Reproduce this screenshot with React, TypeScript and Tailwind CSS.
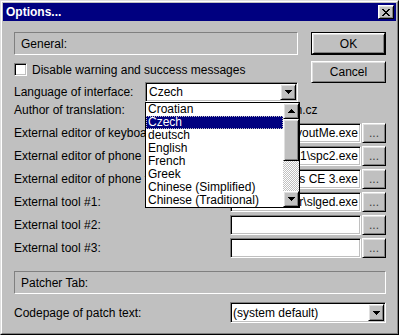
import React from 'react';

const sunken =
  'border border-t-[#808080] border-l-[#808080] border-r-white border-b-white shadow-[inset_1px_1px_0_#000,inset_-1px_-1px_0_#c0c0c0] p-[1px]';
const raised =
  'border border-t-white border-l-white border-r-black border-b-black shadow-[inset_1px_1px_0_#dfdfdf,inset_-1px_-1px_0_#808080] bg-[#c0c0c0]';

const Arrow = ({ up = false }: { up?: boolean }) => {
  const rows = up ? [3, 2, 1, 0] : [0, 1, 2, 3];
  return (
    <svg width="7" height="4" viewBox="0 0 7 4" shapeRendering="crispEdges">
      {rows.map((r, i) => (
        <rect key={i} x={r} y={i} width={7 - r * 2} height="1" fill="#000" />
      ))}
    </svg>
  );
};

const CloseGlyph = () => {
  const pattern = ['XX....XX', '.XX..XX.', '..XXXX..', '...XX...', '..XXXX..', '.XX..XX.', 'XX....XX'];
  return (
    <svg width="8" height="7" viewBox="0 0 8 7" shapeRendering="crispEdges">
      {pattern.map((row, y) =>
        row.split('').map((c, x) => (c === 'X' ? <rect key={`${x}-${y}`} x={x} y={y} width="1" height="1" fill="#000" /> : null))
      )}
    </svg>
  );
};

const ComboButton = () => (
  <div className={`${raised} w-[16px] h-full flex items-center justify-center shrink-0`}>
    <Arrow />
  </div>
);

const languages = ['Croatian', 'Czech', 'deutsch', 'English', 'French', 'Greek', 'Chinese (Simplified)', 'Chinese (Traditional)'];

const fields = [
  { label: 'External editor of keyboard layout:', value: 'C:\\Programs\\LayoutMe\\LayoutMe.exe' },
  { label: 'External editor of phone pictures:', value: 'C:\\Programs\\Siemens\\1\\spc2.exe' },
  { label: 'External editor of phone fonts:', value: 'C:\\Programs\\Siemens CE 3.exe' },
  { label: 'External tool #1:', value: 'C:\\Programs\\SLGEditor\\slged.exe' },
  { label: 'External tool #2:', value: '' },
  { label: 'External tool #3:', value: '' },
];

const DropList = () => (
  <div className="absolute left-0 top-full z-10 w-[155px] h-[106px] border border-black bg-white flex">
    <div className="w-[137px] flex flex-col">
      {languages.map((lang) => (
        <div
          key={lang}
          className={
            lang === 'Czech'
              ? 'h-[13px] leading-[13px] pl-[2px] bg-[#000080] text-white outline outline-1 outline-dotted outline-[#c0c0c0] -outline-offset-1 whitespace-nowrap'
              : 'h-[13px] leading-[13px] pl-[2px] whitespace-nowrap'
          }
        >
          {lang}
        </div>
      ))}
    </div>
    <div className="w-[16px] flex flex-col">
      <div className={`${raised} h-[16px] flex items-center justify-center`}>
        <Arrow up />
      </div>
      <div className={`${raised} h-[42px]`} />
      <div className="flex-1 bg-[repeating-conic-gradient(#c0c0c0_0%_25%,#ffffff_0%_50%)] bg-[length:2px_2px]" />
      <div className={`${raised} h-[16px] flex items-center justify-center`}>
        <Arrow />
      </div>
    </div>
  </div>
);

export default function App() {
  return (
    <div className="w-[399px] h-[335px] bg-[#c0c0c0] font-['Liberation_Sans',Arial,sans-serif] text-[12px] leading-[14px] text-black border border-t-[#dfdfdf] border-l-[#dfdfdf] border-r-black border-b-black">
      <div className="h-full border border-t-white border-l-white border-r-[#808080] border-b-[#808080] p-[1px]">
        {/* title bar */}
        <div className="h-[18px] bg-[#000080] flex items-center justify-between pl-[3px] pr-[2px]">
          <span className="text-white font-bold">Options...</span>
          <div className={`${raised} w-[16px] h-[14px] flex items-center justify-center`}>
            <CloseGlyph />
          </div>
        </div>

        <div className="pl-[11px] pt-[11px] w-[383px]">
          <div className="flex gap-[13px]">
            <div className="w-[284px] flex flex-col">
              <div className="h-[23px] border border-t-[#808080] border-l-[#808080] border-r-white border-b-white pl-[6px] flex items-center">
                General:
              </div>
              <div className="mt-[7px] h-[15px] flex items-center">
                <div className={`${sunken} w-[13px] h-[13px] bg-white`} />
                <span className="ml-[5px] whitespace-nowrap">Disable warning and success messages</span>
              </div>
              <div className="mt-[5px] h-[20px] flex items-center">
                <span className="w-[131px] whitespace-nowrap">Language of interface:</span>
                <div className="relative w-[153px] h-full">
                  <div className={`${sunken} h-full bg-white flex`}>
                    <span className="flex-1 pl-[2px] flex items-center">Czech</span>
                    <ComboButton />
                  </div>
                  <DropList />
                </div>
              </div>
            </div>
            <div className="w-[75px] flex flex-col">
              <div className="h-[23px] border border-black">
                <div className={`${raised} h-full flex items-center justify-center`}>OK</div>
              </div>
              <div className={`${raised} mt-[6px] h-[22px] flex items-center justify-center`}>Cancel</div>
            </div>
          </div>

          <div className="h-[16px] flex items-center">
            <span className="w-[216px] whitespace-nowrap">Author of translation:</span>
            <span className="pl-[2px] whitespace-nowrap">jan@seznam.cz</span>
          </div>

          <div className="mt-[5px] flex flex-col gap-[3px]">
            {fields.map((f) => (
              <div key={f.label} className="h-[20px] flex items-center">
                <span className="w-[216px] whitespace-nowrap overflow-hidden">{f.label}</span>
                <div className={`${sunken} w-[131px] h-full bg-white flex items-center justify-end overflow-hidden`}>
                  <span className="whitespace-nowrap pr-[1px]">{f.value}</span>
                </div>
                <div className={`${raised} ml-[1px] w-[24px] h-full flex items-center justify-center text-[#404040]`}>
                  ...
                </div>
              </div>
            ))}
          </div>

          <div className="mt-[13px] h-[23px] border border-t-[#808080] border-l-[#808080] border-r-white border-b-white pl-[6px] flex items-center">
            Patcher Tab:
          </div>

          <div className="mt-[8px] h-[21px] flex items-center">
            <span className="w-[216px] whitespace-nowrap">Codepage of patch text:</span>
            <div className={`${sunken} w-[156px] h-full bg-white flex`}>
              <span className="flex-1 pl-[1px] flex items-center whitespace-nowrap">(system default)</span>
              <ComboButton />
            </div>
          </div>
        </div>
      </div>
    </div>
  );
}
